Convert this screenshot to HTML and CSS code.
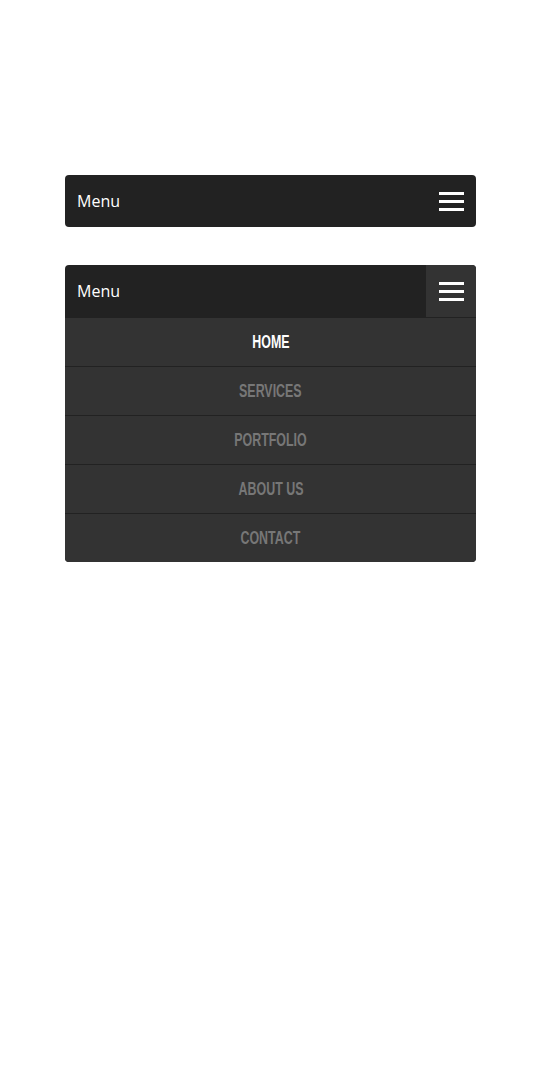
FILE: index.html
```html
<!DOCTYPE html>
<html lang="en">
<head>
  <meta charset="UTF-8" />
  <meta name="viewport" content="width=device-width, initial-scale=1.0"/>
  <title>Responsive Menu</title>
  <link rel="stylesheet" href="styles.css">
</head>
<body>
  <div class="wrap">
    <!-- Collapsed menu -->
    <nav class="menu">
      <div class="menu-bar">
        <span class="menu-title">Menu</span>
        <button class="menu-toggle" aria-label="Open menu">
          <span></span><span></span><span></span>
        </button>
      </div>
    </nav>

    <!-- Expanded menu -->
    <nav class="menu open">
      <div class="menu-bar">
        <span class="menu-title">Menu</span>
        <button class="menu-toggle" aria-label="Close menu">
          <span></span><span></span><span></span>
        </button>
      </div>
      <ul class="menu-list">
        <li><a href="#" class="active"><span>Home</span></a></li>
        <li><a href="#"><span>Services</span></a></li>
        <li><a href="#"><span>Portfolio</span></a></li>
        <li><a href="#"><span>About Us</span></a></li>
        <li><a href="#"><span>Contact</span></a></li>
      </ul>
    </nav>
  </div>
</body>
</html>
```

FILE: styles.css
```css
* {
  box-sizing: border-box;
}

body {
  margin: 0;
  background: #fff;
  font-family: "Open Sans", "DejaVu Sans", sans-serif;
}

.wrap {
  width: 411px;
  margin: 175px auto 0 65px;
  display: flex;
  flex-direction: column;
  gap: 38px;
}

.menu {
  background: #222;
  border-radius: 4px;
  overflow: hidden;
}

.menu-bar {
  display: flex;
  align-items: stretch;
  justify-content: space-between;
  height: 52px;
}

.menu-title {
  display: flex;
  align-items: center;
  padding-left: 12px;
  color: #fff;
  font-size: 16px;
}

.menu-toggle {
  width: 50px;
  padding: 0 12px 0 13px;
  border: 0;
  background: transparent;
  display: flex;
  flex-direction: column;
  justify-content: center;
  gap: 5px;
  cursor: pointer;
}

.menu-toggle span {
  display: block;
  width: 25px;
  height: 3px;
  background: #fff;
}

.menu.open .menu-toggle {
  background: #333;
}

.menu-list {
  list-style: none;
  margin: 0;
  padding: 0;
}

.menu-list li {
  border-top: 1px solid #222;
  background: #333;
}

.menu-list a {
  display: flex;
  align-items: center;
  justify-content: center;
  height: 48px;
  padding-top: 1px;
  color: #777;
  text-decoration: none;
  text-transform: uppercase;
  font-family: "Liberation Sans", Arial, sans-serif;
  font-weight: bold;
  font-size: 18px;
}

/* no condensed face installed, so squeeze the bold one */
.menu-list a span {
  display: inline-block;
  transform: scaleX(0.69);
}

.menu-list a.active {
  color: #fff;
}
```
